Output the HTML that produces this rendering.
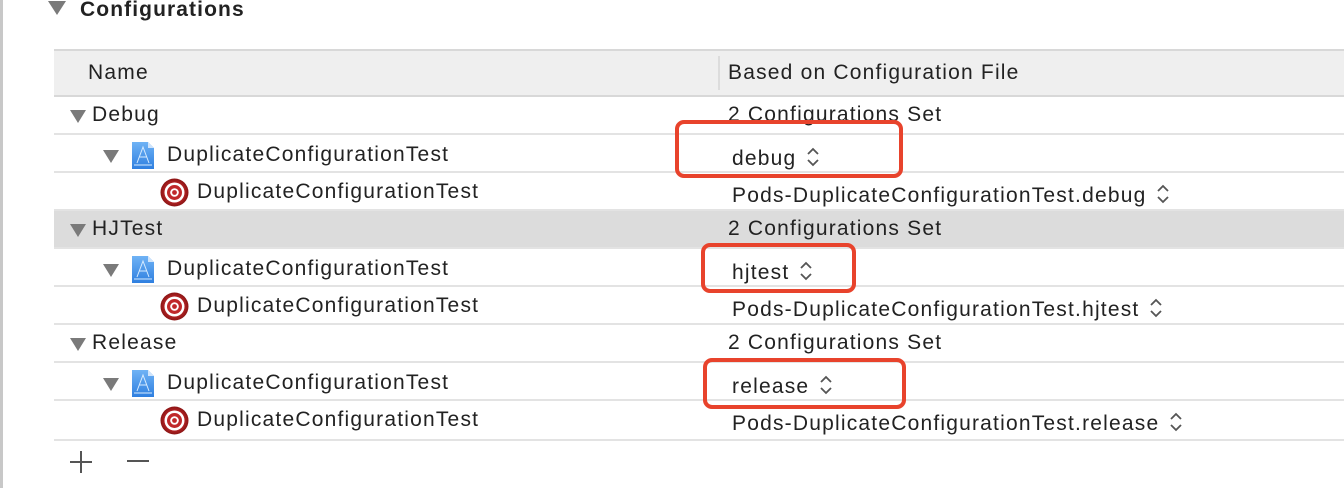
<!DOCTYPE html>
<html><head><style>
body{margin:0;width:1344px;height:488px;background:#fff;position:relative;overflow:hidden;font-family:"Liberation Sans",Helvetica,sans-serif;color:#222;}
.a{position:absolute;white-space:nowrap}
.t{font-size:21px;line-height:20px;letter-spacing:1.2px}
.line{position:absolute;left:54px;right:0;height:2px;background:#e3e3e3}
.tri{position:absolute;width:0;height:0;border-left:8px solid transparent;border-right:8px solid transparent;border-top:13px solid #7a7a7a}
.box{position:absolute;border:4px solid #e8432c;border-radius:9px;box-sizing:border-box}
.ud{display:inline-block;margin-left:10px;vertical-align:-3px}
</style></head><body>
<div class="a" style="left:0;top:0;width:3px;height:488px;background:#c8c8c8"></div>
<div class="tri" style="left:48px;top:1px;border-left-width:9px;border-right-width:9px;border-top-width:14px"></div>
<div class="a" style="left:80px;top:-2px;font-size:21px;font-weight:bold;letter-spacing:1.1px">Configurations</div>
<div class="a" style="left:54px;right:0;top:49px;height:48px;background:#efefef;border-top:2px solid #d8d8d8;border-bottom:2px solid #d8d8d8;box-sizing:border-box"></div>
<div class="a" style="left:718px;top:56px;width:2px;height:34px;background:#dcdcdc"></div>
<div class="a t" style="left:88px;top:63px">Name</div>
<div class="a t" style="left:728px;top:63px">Based on Configuration File</div>
<div class="a" style="left:54px;right:0;top:210px;height:38px;background:#dcdcdc"></div>

<div class="line" style="top:133px"></div><div class="line" style="top:171px"></div><div class="line" style="top:209px"></div>
<div class="line" style="top:247px"></div><div class="line" style="top:285px"></div><div class="line" style="top:323px"></div>
<div class="line" style="top:361px"></div><div class="line" style="top:399px"></div><div class="line" style="top:439px"></div>

<div class="tri" style="left:70px;top:110px"></div><div class="a t" style="left:92px;top:105px">Debug</div><div class="a t" style="left:728px;top:105px">2 Configurations Set</div>
<div class="tri" style="left:70px;top:224px"></div><div class="a t" style="left:92px;top:219px">HJTest</div><div class="a t" style="left:728px;top:219px">2 Configurations Set</div>
<div class="tri" style="left:70px;top:338px"></div><div class="a t" style="left:92px;top:333px">Release</div><div class="a t" style="left:728px;top:333px">2 Configurations Set</div>

<svg width="0" height="0" style="position:absolute"><defs>
<linearGradient id="g" x1="0" y1="0" x2="0" y2="1"><stop offset="0" stop-color="#6fb3f5"/><stop offset="1" stop-color="#2f7fe0"/></linearGradient>
<radialGradient id="r"><stop offset="0.6" stop-color="#c0282a"/><stop offset="1" stop-color="#8a1414"/></radialGradient>
</defs></svg>

<div class="tri" style="left:103px;top:150px"></div>
<svg class="a" style="left:131px;top:141px" width="24" height="29"><path d="M1 1H17L23 7V28H1Z" fill="url(#g)"/><path d="M17 1V7H23" fill="#cfe4fb"/><path d="M6 22L12 6L18 22M8 16H16M3 24H21" stroke="#d6ebff" stroke-width="1" fill="none"/></svg>
<div class="a t" style="left:167px;top:145px">DuplicateConfigurationTest</div>
<svg class="a" style="left:160px;top:178px" width="29" height="29"><circle cx="14.5" cy="14.5" r="14" fill="url(#r)"/><circle cx="14.5" cy="14.5" r="10" fill="#fff"/><circle cx="14.5" cy="14.5" r="7.5" fill="#c0282a"/><circle cx="14.5" cy="14.5" r="4.3" fill="#fff"/><circle cx="14.5" cy="14.5" r="2.4" fill="#c0282a"/></svg>
<div class="a t" style="left:197px;top:182px">DuplicateConfigurationTest</div>
<div class="a t" style="left:732px;top:146px">debug<svg class="ud" width="14" height="22"><path d="M2 8L7 3L12 8M2 14L7 19L12 14" stroke="#555" stroke-width="1.8" fill="none"/></svg></div>
<div class="a t" style="left:732px;top:183px">Pods-DuplicateConfigurationTest.debug<svg class="ud" width="14" height="22"><path d="M2 8L7 3L12 8M2 14L7 19L12 14" stroke="#555" stroke-width="1.8" fill="none"/></svg></div>

<div class="tri" style="left:103px;top:264px"></div>
<svg class="a" style="left:131px;top:255px" width="24" height="29"><path d="M1 1H17L23 7V28H1Z" fill="url(#g)"/><path d="M17 1V7H23" fill="#cfe4fb"/><path d="M6 22L12 6L18 22M8 16H16M3 24H21" stroke="#d6ebff" stroke-width="1" fill="none"/></svg>
<div class="a t" style="left:167px;top:259px">DuplicateConfigurationTest</div>
<svg class="a" style="left:160px;top:292px" width="29" height="29"><circle cx="14.5" cy="14.5" r="14" fill="url(#r)"/><circle cx="14.5" cy="14.5" r="10" fill="#fff"/><circle cx="14.5" cy="14.5" r="7.5" fill="#c0282a"/><circle cx="14.5" cy="14.5" r="4.3" fill="#fff"/><circle cx="14.5" cy="14.5" r="2.4" fill="#c0282a"/></svg>
<div class="a t" style="left:197px;top:296px">DuplicateConfigurationTest</div>
<div class="a t" style="left:732px;top:260px">hjtest<svg class="ud" width="14" height="22"><path d="M2 8L7 3L12 8M2 14L7 19L12 14" stroke="#555" stroke-width="1.8" fill="none"/></svg></div>
<div class="a t" style="left:732px;top:297px">Pods-DuplicateConfigurationTest.hjtest<svg class="ud" width="14" height="22"><path d="M2 8L7 3L12 8M2 14L7 19L12 14" stroke="#555" stroke-width="1.8" fill="none"/></svg></div>

<div class="tri" style="left:103px;top:378px"></div>
<svg class="a" style="left:131px;top:369px" width="24" height="29"><path d="M1 1H17L23 7V28H1Z" fill="url(#g)"/><path d="M17 1V7H23" fill="#cfe4fb"/><path d="M6 22L12 6L18 22M8 16H16M3 24H21" stroke="#d6ebff" stroke-width="1" fill="none"/></svg>
<div class="a t" style="left:167px;top:373px">DuplicateConfigurationTest</div>
<svg class="a" style="left:160px;top:406px" width="29" height="29"><circle cx="14.5" cy="14.5" r="14" fill="url(#r)"/><circle cx="14.5" cy="14.5" r="10" fill="#fff"/><circle cx="14.5" cy="14.5" r="7.5" fill="#c0282a"/><circle cx="14.5" cy="14.5" r="4.3" fill="#fff"/><circle cx="14.5" cy="14.5" r="2.4" fill="#c0282a"/></svg>
<div class="a t" style="left:197px;top:410px">DuplicateConfigurationTest</div>
<div class="a t" style="left:732px;top:374px">release<svg class="ud" width="14" height="22"><path d="M2 8L7 3L12 8M2 14L7 19L12 14" stroke="#555" stroke-width="1.8" fill="none"/></svg></div>
<div class="a t" style="left:732px;top:411px">Pods-DuplicateConfigurationTest.release<svg class="ud" width="14" height="22"><path d="M2 8L7 3L12 8M2 14L7 19L12 14" stroke="#555" stroke-width="1.8" fill="none"/></svg></div>

<svg class="a" style="left:68px;top:450px" width="90" height="24"><path d="M13 1V23M2 12H24M59 11H81" stroke="#555" stroke-width="2" fill="none"/></svg>

<div class="box" style="left:675px;top:120px;width:228px;height:58px"></div>
<div class="box" style="left:701px;top:243px;width:155px;height:50px"></div>
<div class="box" style="left:703px;top:358px;width:203px;height:51px"></div>
</body></html>
